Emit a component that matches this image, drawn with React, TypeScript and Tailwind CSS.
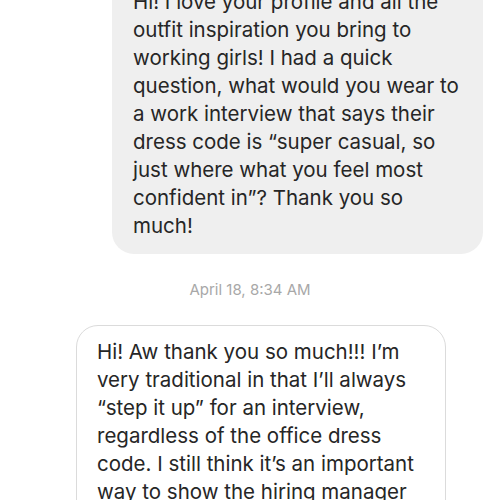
const question = [
  "Hi! I love your profile and all the",
  "outfit inspiration you bring to",
  "working girls! I had a quick",
  "question, what would you wear to",
  "a work interview that says their",
  "dress code is “super casual, so",
  "just where what you feel most",
  "confident in”? Thank you so",
  "much!",
];

const reply = [
  "Hi! Aw thank you so much!!! I’m",
  "very traditional in that I’ll always",
  "“step it up” for an interview,",
  "regardless of the office dress",
  "code. I still think it’s an important",
  "way to show the hiring manager",
  "that you take the opportunity",
];

export default function App() {
  return (
    <div className="w-[500px] h-[500px] overflow-hidden bg-white font-['Inter',_'Noto_Sans',_sans-serif] text-[#262626]">
      {/* incoming question */}
      <div className="flex justify-end pr-[17px]">
        <div className="-mt-[26px] w-[371px] rounded-[22px] bg-[#efefef] pl-[21px] pr-[12px] py-[14px] text-[20.5px] leading-[28px] whitespace-nowrap">
          {question.map((l, i) => (
            <div key={i}>{l}</div>
          ))}
        </div>
      </div>

      {/* timestamp */}
      <div className="mt-[26px] text-center text-[15px] leading-[20px] text-[#a8a8a8]">
        April 18, 8:34 AM
      </div>

      {/* reply */}
      <div className="mt-[25px] pl-[76px]">
        <div className="w-[370px] rounded-[22px] border border-[#dbdbdb] bg-white pl-[20px] pr-[12px] py-[12px] text-[20.5px] leading-[28px] whitespace-nowrap">
          {reply.map((l, i) => (
            <div key={i}>{l}</div>
          ))}
        </div>
      </div>
    </div>
  );
}
